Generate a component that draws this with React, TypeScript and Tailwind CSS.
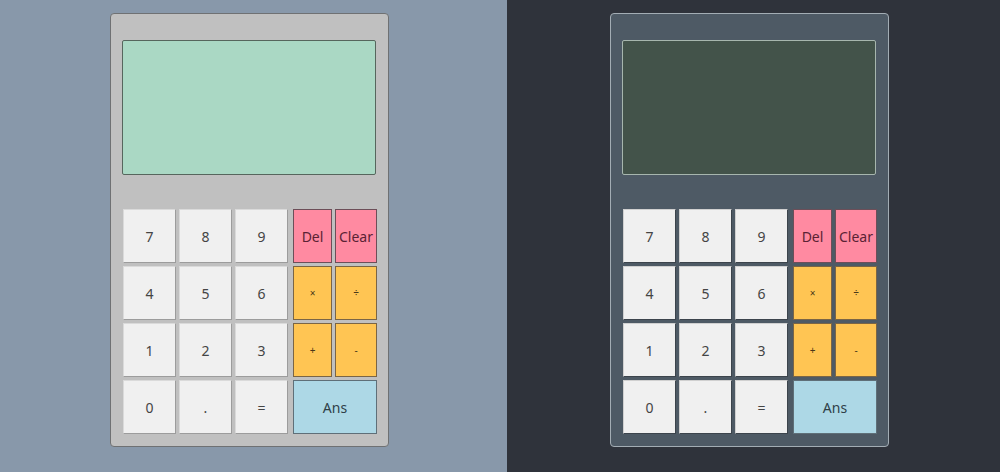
const digits = ["7", "8", "9", "4", "5", "6", "1", "2", "3", "0", ".", "="];

const Calc = ({ dark }: { dark: boolean }) => {
  const digitBorder = dark
    ? "border-[#d0d0d0] border-r-[#3c444c] border-b-[#3c444c]"
    : "border-[#dadada] border-r-[#9c9c9c] border-b-[#9c9c9c]";

  return (
    <div
      className={
        "w-[279px] h-[434px] rounded-[4px] border pl-[11px] pt-[26px] " +
        (dark ? "bg-[#4e5a65] border-[#a3adb4]" : "bg-[#c0c0c0] border-[#6f7173]")
      }
    >
      <div
        className={
          "w-[254px] h-[135px] rounded-[2px] border " +
          (dark ? "bg-[#43534a] border-[#a7b6ae]" : "bg-[#aad8c4] border-[#56665d]")
        }
      />

      <div className="mt-[34px] ml-px flex gap-[5px]">
        {/* numbers */}
        <div className="grid grid-cols-[53px_53px_53px] auto-rows-[54px] gap-[3px]">
          {digits.map((d) => (
            <button
              key={d}
              className={"bg-[#f0f0f0] border text-[#444] flex items-center justify-center " + digitBorder}
            >
              {d}
            </button>
          ))}
        </div>

        {/* operators */}
        <div className="grid grid-cols-[39px_42px] auto-rows-[54px] gap-[3px]">
          <button className="bg-[#ff8aa1] border border-[#6d4e58] text-[#5a2234]">Del</button>
          <button className="bg-[#ff8aa1] border border-[#6d4e58] text-[#5a2234]">Clear</button>
          <button className="bg-[#ffc553] border border-[#7a6546] text-[#4a3818] text-[10px]">×</button>
          <button className="bg-[#ffc553] border border-[#7a6546] text-[#4a3818] text-[10px]">÷</button>
          <button className="bg-[#ffc553] border border-[#7a6546] text-[#4a3818] text-[10px]">+</button>
          <button className="bg-[#ffc553] border border-[#7a6546] text-[#4a3818] text-[10px]">-</button>
          <button className="col-span-2 bg-[#add8e6] border border-[#5f6f78] text-[#2f3f48]">Ans</button>
        </div>
      </div>
    </div>
  );
};

const App = () => {
  return (
    <div
      className="flex w-[1000px] h-[472px] text-[14px]"
      style={{ fontFamily: '"Noto Sans", "Open Sans", sans-serif' }}
    >
      <div className="w-[507px] bg-[#8898aa] pl-[110px] pt-[13px]">
        <Calc dark={false} />
      </div>
      <div className="flex-1 bg-[#2f333b] pl-[103px] pt-[13px]">
        <Calc dark={true} />
      </div>
    </div>
  );
};

export default App;
